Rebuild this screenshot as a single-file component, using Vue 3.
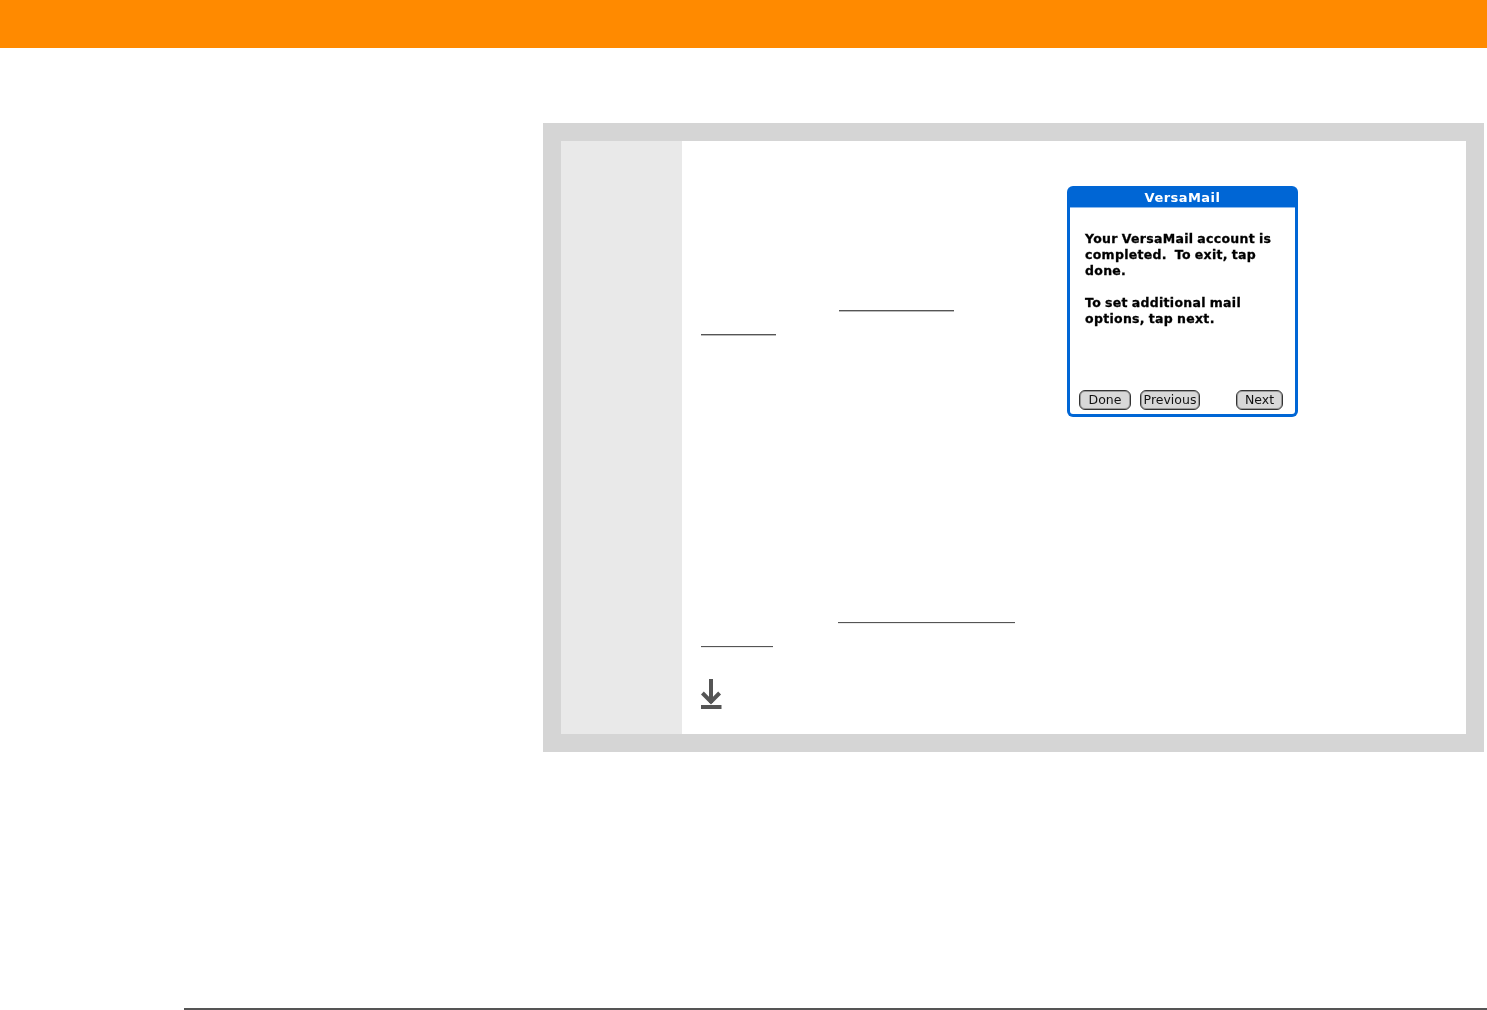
<script setup>
const paragraphs = [
  ['Your VersaMail account is', 'completed.  To exit, tap', 'done.'],
  ['To set additional mail', 'options, tap next.'],
]
</script>

<template>
  <div class="page">
    <header class="topbar"></header>
    <section class="panel">
      <aside class="side"></aside>
      <div class="main">
        <div class="upper">
          <div class="links">
            <a class="link heavy first" href="#"></a>
            <a class="link heavy first-wrap" href="#"></a>
          </div>
          <div class="device">
            <div class="title">VersaMail</div>
            <div class="body">
              <div class="message">
                <p v-for="(lines, i) in paragraphs" :key="i">
                  <span v-for="line in lines" :key="line" class="msg-line">{{ line }}</span>
                </p>
              </div>
              <div class="buttons">
                <button class="btn done">Done</button>
                <button class="btn previous">Previous</button>
                <button class="btn next">Next</button>
              </div>
            </div>
          </div>
        </div>
        <div class="lower">
          <a class="link second" href="#"></a>
          <a class="link second-wrap" href="#"></a>
          <svg class="arrow" width="22" height="30" viewBox="0 0 22 30" aria-hidden="true">
            <path d="M8 0h4v24H8z" fill="#555" />
            <path d="M1.4 14l8.6 8.6 8.6-8.6" fill="none" stroke="#555" stroke-width="4" />
            <path d="M0 26h20.5v4H0z" fill="#555" />
          </svg>
        </div>
      </div>
    </section>
    <footer class="foot"></footer>
  </div>
</template>

<style>
html, body { margin: 0; background: #fff; }
</style>

<style scoped>
.page {
  width: 1487px;
  height: 1010px;
  display: flex;
  flex-direction: column;
  overflow: hidden;
  background: #fff;
}
.topbar {
  height: 48px;
  flex: none;
  background: #ff8a00;
}
.panel {
  margin: 75px 0 0 543px;
  width: 941px;
  height: 629px;
  box-sizing: border-box;
  padding: 18px;
  flex: none;
  display: flex;
  background: #d5d5d5;
}
.side {
  width: 121px;
  flex: none;
  background: #e9e9e9;
}
.main {
  flex: 1;
  background: #fff;
  padding: 45px 0 0 19px;
  display: flex;
  flex-direction: column;
}
.upper {
  display: flex;
  height: 231px;
}
.links {
  width: 366px;
  flex: none;
  display: flex;
  flex-direction: column;
}
.link {
  display: block;
  height: 1px;
  background: #555;
  box-shadow: 0 1px 0 rgba(85, 85, 85, 0.12);
}
.heavy {
  box-shadow: 0 1px 0 rgba(85, 85, 85, 0.4);
}
.first { width: 115px; margin: 124px 0 0 138px; }
.first-wrap { width: 75px; margin-top: 23px; }
.device {
  width: 231px;
  height: 231px;
  box-sizing: border-box;
  flex: none;
  display: flex;
  flex-direction: column;
  background: #0066d5;
  border-radius: 6px;
  padding: 0 3px 3px;
  font-family: "DejaVu Sans", sans-serif;
}
.title {
  height: 21px;
  flex: none;
  color: #fff;
  font-size: 13px;
  font-weight: 700;
  letter-spacing: 0.45px;
  line-height: 23px;
  text-align: center;
  filter: blur(0.3px);
}
.body {
  flex: 1;
  background: #fff;
  border-top: 1px solid #8ab8ec;
  display: flex;
  flex-direction: column;
  padding: 0 12px 4px 15px;
  border-radius: 0 0 3px 3px;
}
.message {
  flex: 1;
  padding-top: 23px;
  color: #000;
  font-size: 12.5px;
  font-weight: 700;
  letter-spacing: 0.3px;
  word-spacing: -0.7px;
  line-height: 16px;
  filter: blur(0.35px);
}
.message p { margin: 0 0 16px; }
.msg-line {
  display: block;
  white-space: pre;
  -webkit-text-stroke: 0.3px #000;
}
.buttons {
  display: flex;
  margin-left: -6px;
}
.btn {
  height: 20px;
  box-sizing: border-box;
  padding: 0 0 2px;
  border: 1px solid #333;
  border-radius: 6px;
  background: #d8d8d8;
  box-shadow: inset 0 0 0 1px #9a9a9a;
  color: #111;
  font-family: "DejaVu Sans", sans-serif;
  font-size: 12.5px;
  line-height: 15px;
  filter: blur(0.25px);
}
.done { width: 52px; }
.previous { width: 60px; margin-left: 9px; }
.next { width: 47px; margin-left: 36px; }
.lower {
  display: flex;
  flex-direction: column;
  flex: 1;
}
.second { width: 177px; margin: 205px 0 0 137px; }
.second-wrap { width: 72px; margin-top: 23px; }
.arrow {
  display: block;
  margin-top: 32px;
}
.foot {
  margin: 256px 0 0 184px;
  height: 2px;
  flex: none;
  background: #555;
}
</style>
